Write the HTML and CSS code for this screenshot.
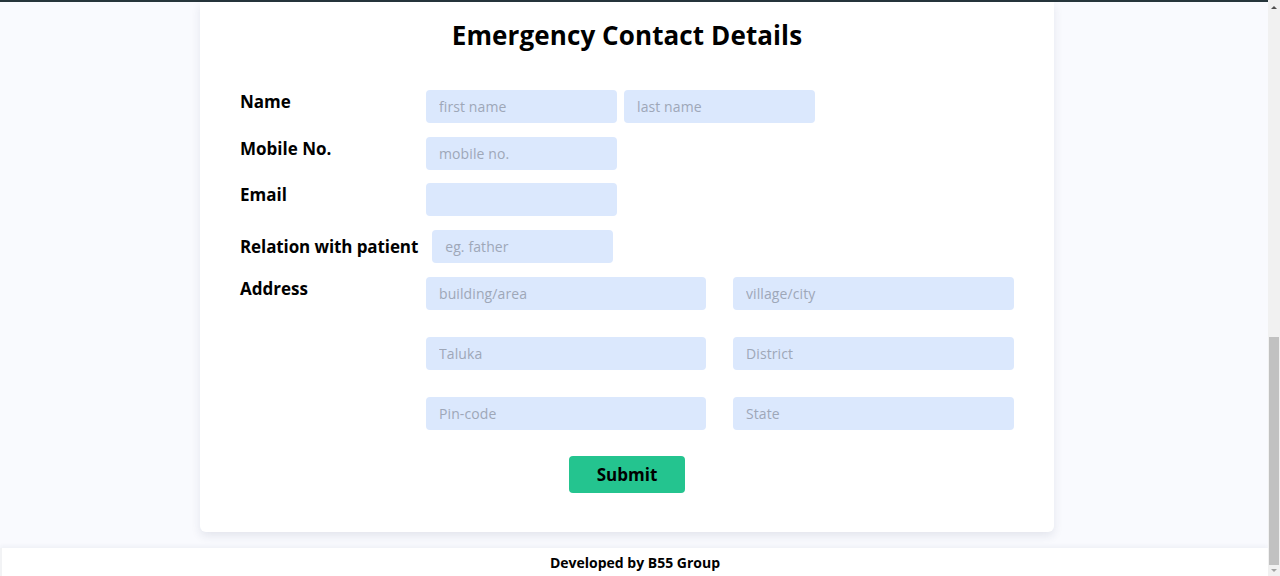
FILE: index.html
```html
<!DOCTYPE html>
<html lang="en">
<head>
<meta charset="utf-8">
<title>Emergency Contact Details</title>
<link rel="stylesheet" href="styles.css">
</head>
<body>
<div class="viewport">
  <div class="page">
    <div class="navbar-edge"></div>
    <main class="main">
      <section class="card">
        <h1 class="title">Emergency Contact Details</h1>
        <form class="form">
          <div class="row">
            <label class="label">Name</label>
            <div class="fields">
              <input class="input" type="text" placeholder="first name">
              <input class="input" type="text" placeholder="last name">
            </div>
          </div>
          <div class="row">
            <label class="label">Mobile No.</label>
            <div class="fields">
              <input class="input" type="text" placeholder="mobile no.">
            </div>
          </div>
          <div class="row row-tight">
            <label class="label">Email</label>
            <div class="fields">
              <input class="input" type="email">
            </div>
          </div>
          <div class="row row-center">
            <label class="label label-wide">Relation with patient</label>
            <div class="fields">
              <input class="input input-narrow" type="text" placeholder="eg. father">
            </div>
          </div>
          <div class="row">
            <label class="label">Address</label>
            <div class="address-grid">
              <input class="input input-wide" type="text" placeholder="building/area">
              <input class="input input-wide" type="text" placeholder="village/city">
              <input class="input input-wide" type="text" placeholder="Taluka">
              <input class="input input-wide" type="text" placeholder="District">
              <input class="input input-wide" type="text" placeholder="Pin-code">
              <input class="input input-wide" type="text" placeholder="State">
            </div>
          </div>
          <div class="actions">
            <button class="submit" type="button">Submit</button>
          </div>
        </form>
      </section>
    </main>
    <footer class="footer">Developed by B55 Group</footer>
  </div>
  <div class="scrollbar">
    <div class="sb-btn"><span class="arrow-up"></span></div>
    <div class="sb-track">
      <div class="sb-thumb"></div>
    </div>
    <div class="sb-btn sb-btn-down"><span class="arrow-down"></span></div>
  </div>
</div>
</body>
</html>
```

FILE: styles.css
```css
* { box-sizing: border-box; }

html, body {
  margin: 0;
  padding: 0;
  height: 576px;
  overflow: hidden;
}

body {
  font-family: "Open Sans", "Liberation Sans", sans-serif;
  color: #000;
  background: #f9fafe;
}

.viewport {
  display: flex;
  height: 576px;
}

.page {
  flex: 1;
  display: flex;
  flex-direction: column;
  background: #f9fafe;
  min-width: 0;
}

.navbar-edge {
  height: 2px;
  background: #26353b;
  flex: none;
}

.main {
  flex: 1;
  display: flex;
  padding-left: 200px;
  padding-bottom: 16px;
}

.card {
  width: 854px;
  background: #fff;
  border-radius: 0 0 6px 6px;
  box-shadow: 0 4px 10px rgba(40, 50, 90, 0.10);
  padding: 13px 40px 39px 40px;
}

.title {
  margin: 0;
  text-align: center;
  font-size: 26px;
  line-height: 40px;
  font-weight: 700;
  letter-spacing: 0.1px;
}

.form {
  margin-top: 35px;
  display: flex;
  flex-direction: column;
  gap: 14px;
}

.row {
  display: flex;
  align-items: flex-start;
}

.row-tight {
  margin-top: -1px;
}

.row-center {
  align-items: center;
}

.label {
  width: 186px;
  flex: none;
  font-size: 17px;
  line-height: 23px;
  font-weight: 700;
}

.label-wide {
  width: auto;
  margin-right: 14px;
  letter-spacing: -0.1px;
}

.fields {
  display: flex;
  gap: 7px;
}

.input {
  width: 191px;
  height: 33px;
  border: none;
  border-radius: 4px;
  background: #dbe8fd;
  padding: 0 13px;
  font-family: inherit;
  font-size: 14px;
  letter-spacing: 0.1px;
  color: #333;
  outline: none;
}

.input::placeholder {
  color: #9ea7b8;
}

.input-narrow {
  width: 181px;
}

.input-wide {
  width: 100%;
}

.address-grid {
  display: grid;
  grid-template-columns: 280px 281px;
  column-gap: 27px;
  row-gap: 27px;
}

.actions {
  display: flex;
  justify-content: center;
  margin-top: 12px;
}

.submit {
  width: 116px;
  height: 37px;
  border: none;
  border-radius: 4px;
  background: #24c48f;
  font-family: inherit;
  font-size: 17px;
  font-weight: 700;
  color: #000;
}

.footer {
  flex: none;
  height: 28px;
  background: #fff;
  box-shadow: 0 -2px 4px rgba(40, 50, 90, 0.05);
  display: flex;
  align-items: center;
  justify-content: center;
  font-size: 14px;
  font-weight: 700;
  border-left: 2px solid #f2f3f5;
}

.scrollbar {
  width: 12px;
  flex: none;
  display: flex;
  flex-direction: column;
  background: #f1f1f1;
}

.sb-btn {
  height: 12px;
  flex: none;
  display: flex;
  align-items: center;
  justify-content: center;
}

.sb-btn-down {
  height: 11px;
}

.arrow-up {
  width: 0;
  height: 0;
  border-left: 3px solid transparent;
  border-right: 3px solid transparent;
  border-bottom: 3px solid #505050;
  margin-top: 2px;
}

.arrow-down {
  width: 0;
  height: 0;
  border-left: 3px solid transparent;
  border-right: 3px solid transparent;
  border-top: 3px solid #a3a3a3;
}

.sb-track {
  flex: 1;
  display: flex;
  flex-direction: column;
  justify-content: flex-end;
  padding: 0 1px;
}

.sb-thumb {
  height: 228px;
  background: #c1c1c1;
}
```
